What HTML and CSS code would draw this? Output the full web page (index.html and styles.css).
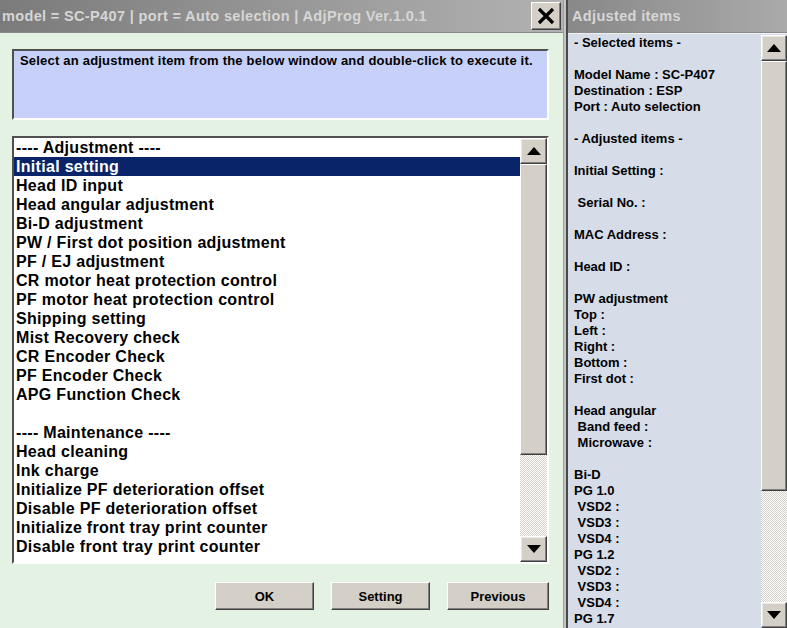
FILE: index.html
```html
<!DOCTYPE html>
<html lang="en">
<head>
    <meta charset="UTF-8">
    <title>AdjProg</title>
    <link rel="stylesheet" href="styles.css">
</head>
<body>
    <div class="app">
        <div class="dlg">
            <div class="titlebar">
                <span class="title-txt">model = SC-P407 | port = Auto selection | AdjProg Ver.1.0.1</span>
                <div class="close">
                    <svg width="18" height="18" viewBox="0 0 18 18"><path d="M2 2 L16 16 M16 2 L2 16" stroke="#000" stroke-width="3.2"/></svg>
                </div>
            </div>
            <div class="dlg-body">
                <div class="hint">Select an adjustment item from the below window and double-click to execute it.</div>
                <div class="list">
                    <ul class="items">
                        <li>---- Adjustment ----</li>
                        <li class="sel">Initial setting</li>
                        <li>Head ID input</li>
                        <li>Head angular adjustment</li>
                        <li>Bi-D adjustment</li>
                        <li>PW / First dot position adjustment</li>
                        <li>PF / EJ adjustment</li>
                        <li>CR motor heat protection control</li>
                        <li>PF motor heat protection control</li>
                        <li>Shipping setting</li>
                        <li>Mist Recovery check</li>
                        <li>CR Encoder Check</li>
                        <li>PF Encoder Check</li>
                        <li>APG Function Check</li>
                        <li>&nbsp;</li>
                        <li>---- Maintenance ----</li>
                        <li>Head cleaning</li>
                        <li>Ink charge</li>
                        <li>Initialize PF deterioration offset</li>
                        <li>Disable PF deterioration offset</li>
                        <li>Initialize front tray print counter</li>
                        <li>Disable front tray print counter</li>
                    </ul>
                    <div class="vscroll list-scroll">
                        <div class="sbtn"><svg width="14" height="8" viewBox="0 0 14 8"><polygon points="7,0 14,8 0,8" fill="#000"/></svg></div>
                        <div class="thumb"></div>
                        <div class="track"></div>
                        <div class="sbtn"><svg width="14" height="8" viewBox="0 0 14 8"><polygon points="0,0 14,0 7,8" fill="#000"/></svg></div>
                    </div>
                </div>
                <div class="actions">
                    <button class="btn">OK</button>
                    <button class="btn">Setting</button>
                    <button class="btn btn-wide">Previous</button>
                </div>
            </div>
        </div>
        <div class="gutter"></div>
        <div class="side">
            <div class="titlebar side-title">
                <span class="title-txt">Adjusted items</span>
            </div>
            <div class="side-body">
                <div class="log">- Selected items -

Model Name : SC-P407
Destination : ESP
Port : Auto selection

- Adjusted items -

Initial Setting :

 Serial No. :

MAC Address :

Head ID :

PW adjustment
Top :
Left :
Right :
Bottom :
First dot :

Head angular
 Band feed :
 Microwave :

Bi-D
PG 1.0
 VSD2 :
 VSD3 :
 VSD4 :
PG 1.2
 VSD2 :
 VSD3 :
 VSD4 :
PG 1.7</div>
                <div class="vscroll side-scroll">
                    <div class="sbtn"><svg width="14" height="8" viewBox="0 0 14 8"><polygon points="7,0 14,8 0,8" fill="#000"/></svg></div>
                    <div class="thumb"></div>
                    <div class="track"></div>
                    <div class="sbtn"><svg width="14" height="8" viewBox="0 0 14 8"><polygon points="0,0 14,0 7,8" fill="#000"/></svg></div>
                </div>
            </div>
        </div>
    </div>
</body>
</html>
```

FILE: styles.css
```css
* {
    box-sizing: border-box;
}

body {
    margin: 0;
    font-family: "Liberation Sans", Arial, sans-serif;
    font-weight: 700;
    color: #000;
    overflow: hidden;
}

.app {
    display: flex;
    width: 787px;
    height: 628px;
    overflow: hidden;
}

/* left dialog */
.dlg {
    width: 563px;
    display: flex;
    flex-direction: column;
    background-color: #e4f2e4;
}

.titlebar {
    height: 33px;
    display: flex;
    align-items: center;
    justify-content: space-between;
    background: linear-gradient(to right, #7b7b7b, #b2b2b2);
    border-bottom: 1px solid #8a8a8a;
    padding-left: 2px;
}

.title-txt {
    color: #d6d6d6;
    font-size: 14.5px;
    letter-spacing: 0.35px;
    white-space: nowrap;
}

.close {
    width: 30px;
    height: 28px;
    margin-right: 2px;
    display: flex;
    align-items: center;
    justify-content: center;
    background-color: #d4d0c8;
    border: 1px solid;
    border-color: #fff #404040 #404040 #fff;
    box-shadow: inset -1px -1px #808080;
}

.dlg-body {
    padding: 16px 14px 0 12px;
    display: flex;
    flex-direction: column;
}

.hint {
    height: 71px;
    background-color: #c6d0f8;
    border: 2px solid;
    border-color: #505050 #fff #fff #505050;
    font-size: 13px;
    letter-spacing: 0.2px;
    line-height: 16px;
    padding: 2px 6px;
}

.list {
    margin-top: 16px;
    height: 428px;
    display: flex;
    background-color: #fff;
    border: 2px solid;
    border-color: #505050 #fff #fff #505050;
}

.items {
    flex: 1;
    list-style: none;
    margin: 0;
    padding: 0;
    font-size: 16px;
    letter-spacing: 0.3px;
}

.items li {
    height: 19px;
    line-height: 19px;
    padding-left: 2px;
    white-space: nowrap;
}

.items .sel {
    background-color: #0a246a;
    color: #fff;
}

/* scrollbars */
.vscroll {
    width: 27px;
    display: flex;
    flex-direction: column;
}

.sbtn {
    height: 26px;
    display: flex;
    align-items: center;
    justify-content: center;
    background-color: #d4d0c8;
    border: 1px solid;
    border-color: #fff #404040 #404040 #fff;
    box-shadow: inset -1px -1px #808080, inset 1px 1px #eae8e3;
}

.thumb {
    background-color: #d4d0c8;
    border: 1px solid;
    border-color: #fff #404040 #404040 #fff;
    box-shadow: inset -1px -1px #808080;
}

.track {
    background-image: repeating-conic-gradient(#fff 0 25%, #d4d0c8 0 50%);
    background-size: 2px 2px;
}

.list-scroll .thumb {
    height: 292px;
}

.list-scroll .track {
    height: 82px;
}

.actions {
    margin-top: 18px;
    display: flex;
    justify-content: flex-end;
    gap: 17px;
}

.btn {
    width: 99px;
    height: 28px;
    font-family: "Liberation Sans", Arial, sans-serif;
    font-weight: 700;
    font-size: 13px;
    background-color: #d4d0c8;
    border: 1px solid;
    border-color: #fff #404040 #404040 #fff;
    box-shadow: inset -1px -1px #808080;
    padding: 0;
}

.btn-wide {
    width: 102px;
}

/* right panel */
.gutter {
    width: 5px;
    background-color: #c4c4c4;
    border-left: 1px solid #a0a0a0;
    border-right: 2px solid #4a4a4a;
}

.side {
    flex: 1;
    display: flex;
    flex-direction: column;
    background-color: #d6dce8;
}

.side-title {
    background: linear-gradient(to right, #888, #aaa);
    padding-left: 4px;
}

.side-body {
    flex: 1;
    display: flex;
    border-top: 1px solid #f0f0f0;
    min-height: 0;
}

.log {
    flex: 1;
    white-space: pre;
    font-size: 13px;
    line-height: 16px;
    padding: 1px 0 0 6px;
    overflow: hidden;
}

.side-scroll {
    width: 26px;
    margin-top: 1px;
}

.side-scroll .thumb {
    height: 431px;
}

.side-scroll .track {
    height: 111px;
}
```
